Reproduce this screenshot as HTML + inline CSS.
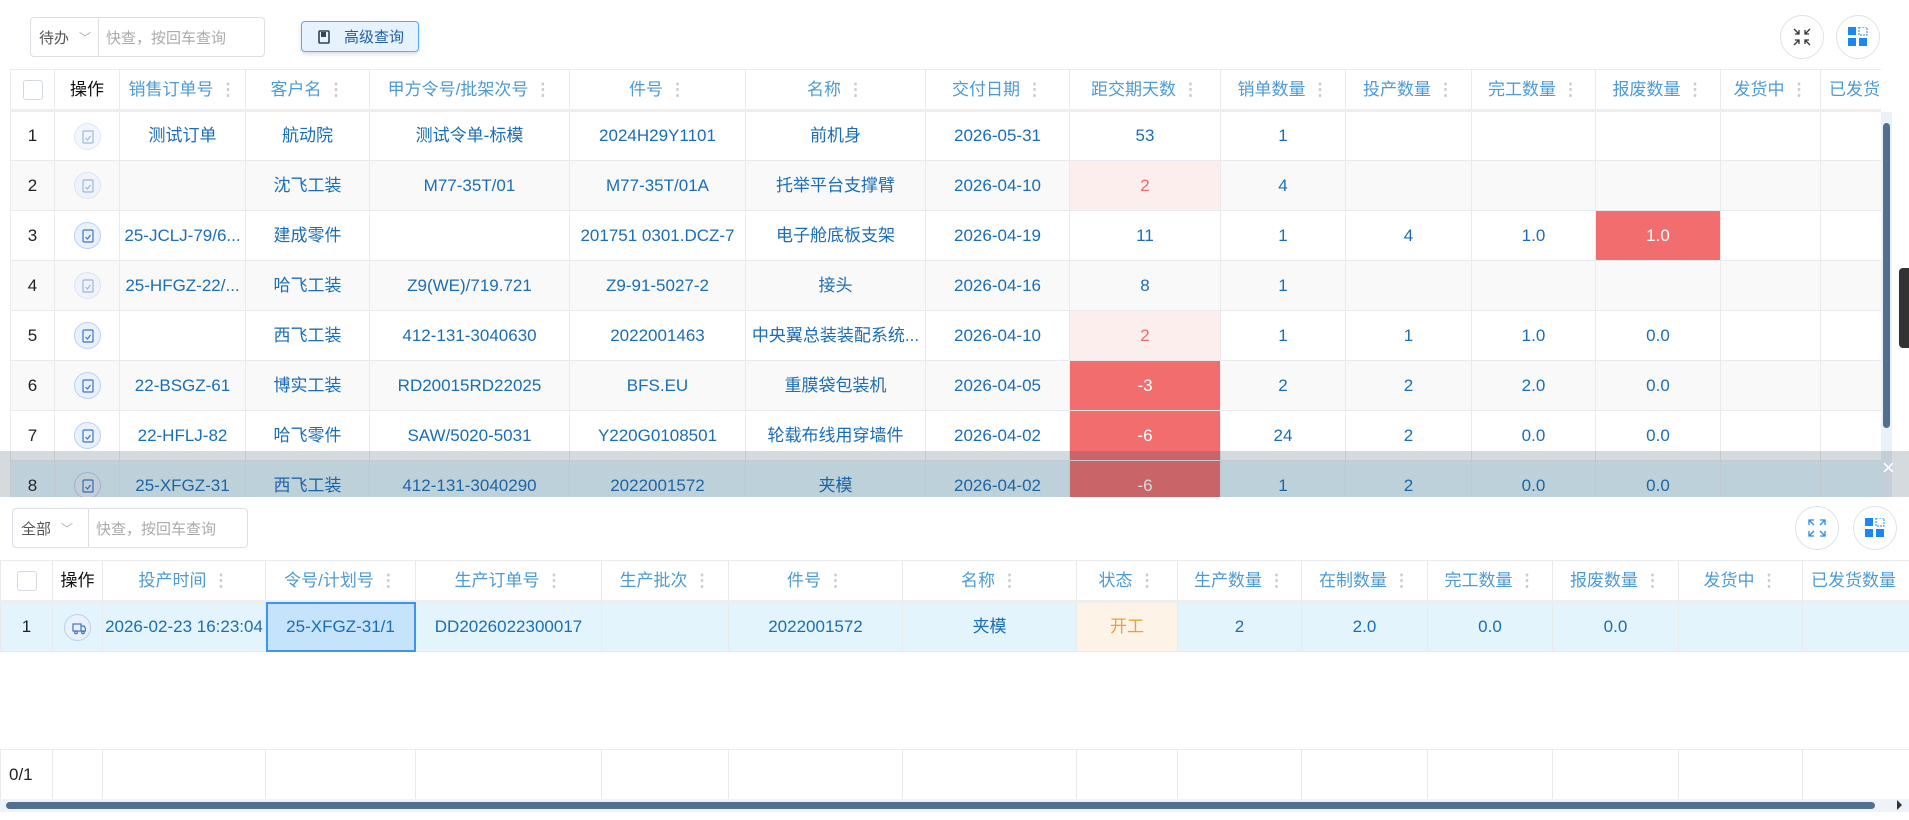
<!DOCTYPE html>
<html><head><meta charset="utf-8"><style>
*{box-sizing:border-box;margin:0;padding:0}
body{width:1909px;height:820px;overflow:hidden;background:#fff;font-family:"Liberation Sans","Noto Sans CJK SC",sans-serif;position:relative}
.abs{position:absolute}
.sel{border:1px solid #dcdfe6;border-radius:4px;display:flex;background:#fff;font-size:15px}
.sel .a{width:68px;border-right:1px solid #dcdfe6;display:flex;align-items:center;padding-left:8px;color:#555}
.sel .a span{margin-left:10px;color:#aaa;font-size:12px}
.sel .b{display:flex;align-items:center;padding-left:7px;color:#aaa}
.circ{width:44px;height:44px;border:1px solid #dde2ea;border-radius:50%;background:#fff;display:flex;align-items:center;justify-content:center}
table{border-collapse:collapse;table-layout:fixed;font-size:17px}
td,th{border:1px solid #e8eaed;text-align:center;white-space:nowrap;overflow:hidden;text-overflow:ellipsis;color:#1a6db8;font-weight:normal;line-height:20px;vertical-align:middle}
th{color:#4d9ad5;height:41px;background:#fff}
th i{font-style:normal;color:#c8ccd2;margin-left:6px;font-weight:bold}
td{height:50px}
td.n{color:#222}
tr.s td{background:#f9f9f9}
.chk{display:inline-block;width:20px;height:20px;border:1px solid #d5d9e0;border-radius:3px;vertical-align:middle}
.ic{display:inline-block;width:27px;height:27px;border-radius:50%;background:#e9f1fc;border:1px solid #bcd0ec;vertical-align:middle;position:relative}
.ic.f{opacity:.5}
.ic svg{position:absolute;left:7px;top:6px}
.pk{background:#fdeeee!important;color:#f06a6a}
.rd{background:#f26d6d!important;color:#fff}
</style></head><body>
<div class="abs sel" style="left:30px;top:17px;width:235px;height:40px"><div class="a">待办<span>﹀</span></div><div class="b">快查，按回车查询</div></div>
<div class="abs" style="left:301px;top:21px;width:118px;height:31px;border:1px solid #5aa9f5;border-radius:4px;background:#e6f3ff;box-shadow:0 2px 4px rgba(0,0,0,.15);font-size:15px;color:#1f5fa8;display:flex;align-items:center;padding-left:16px"><svg width="12" height="14" style="margin-right:14px"><rect x="1" y="1" width="10" height="12" rx="1" fill="none" stroke="#345" stroke-width="1.6"/><rect x="3" y="2" width="5" height="5" fill="#345"/></svg>高级查询</div>
<div class="abs circ" style="left:1780px;top:15px"><svg width="18" height="18" stroke="#333" fill="none" stroke-width="1.3"><path d="M1 1l5 5M6 2v4H2M17 1l-5 5M12 2v4h4M1 17l5-5M6 16v-4H2M17 17l-5-5M12 16v-4h4"/></svg></div>
<div class="abs circ" style="left:1836px;top:15px"><svg width="20" height="20"><rect x="0" y="0" width="8" height="8" fill="#1c86f2"/><rect x="11" y="0" width="8" height="8" fill="none" stroke="#1c86f2" stroke-dasharray="2 1"/><rect x="0" y="11" width="8" height="8" fill="#1c86f2"/><rect x="11" y="11" width="8" height="8" fill="#1c86f2"/></svg></div>

<div class="abs" style="left:10px;top:69px;width:1871px;height:428px;overflow:hidden">
<table style="width:1950px">
<colgroup><col style="width:44px"><col style="width:65px"><col style="width:126px"><col style="width:124px"><col style="width:200px"><col style="width:176px"><col style="width:180px"><col style="width:144px"><col style="width:151px"><col style="width:125px"><col style="width:126px"><col style="width:124px"><col style="width:125px"><col style="width:100px"><col style="width:140px"></colgroup>
<tr style="border-bottom:3px solid #eee"><th><span class="chk"></span></th><th style="color:#111">操作</th><th>销售订单号<i>⋮</i></th><th>客户名<i>⋮</i></th><th>甲方令号/批架次号<i>⋮</i></th><th>件号<i>⋮</i></th><th>名称<i>⋮</i></th><th>交付日期<i>⋮</i></th><th>距交期天数<i>⋮</i></th><th>销单数量<i>⋮</i></th><th>投产数量<i>⋮</i></th><th>完工数量<i>⋮</i></th><th>报废数量<i>⋮</i></th><th>发货中<i>⋮</i></th><th style="text-align:left;padding-left:8px">已发货数量</th></tr>
<tr><td class="n">1</td><td><span class="ic f"><svg width="12" height="14" fill="none" stroke="#3f74c0" stroke-width="1.2"><rect x="1" y="1" width="10" height="12" rx="1"/><path d="M3.5 8l2 2 3-4"/></svg></span></td><td>测试订单</td><td>航动院</td><td>测试令单-标模</td><td>2024H29Y1101</td><td>前机身</td><td>2026-05-31</td><td>53</td><td>1</td><td></td><td></td><td></td><td></td><td></td></tr>
<tr class="s"><td class="n">2</td><td><span class="ic f"><svg width="12" height="14" fill="none" stroke="#3f74c0" stroke-width="1.2"><rect x="1" y="1" width="10" height="12" rx="1"/><path d="M3.5 8l2 2 3-4"/></svg></span></td><td></td><td>沈飞工装</td><td>M77-35T/01</td><td>M77-35T/01A</td><td>托举平台支撑臂</td><td>2026-04-10</td><td class="pk">2</td><td>4</td><td></td><td></td><td></td><td></td><td></td></tr>
<tr><td class="n">3</td><td><span class="ic"><svg width="12" height="14" fill="none" stroke="#3f74c0" stroke-width="1.2"><rect x="1" y="1" width="10" height="12" rx="1"/><path d="M3.5 8l2 2 3-4"/></svg></span></td><td>25-JCLJ-79/6...</td><td>建成零件</td><td></td><td>201751 0301.DCZ-7</td><td>电子舱底板支架</td><td>2026-04-19</td><td>11</td><td>1</td><td>4</td><td>1.0</td><td class="rd">1.0</td><td></td><td></td></tr>
<tr class="s"><td class="n">4</td><td><span class="ic f"><svg width="12" height="14" fill="none" stroke="#3f74c0" stroke-width="1.2"><rect x="1" y="1" width="10" height="12" rx="1"/><path d="M3.5 8l2 2 3-4"/></svg></span></td><td>25-HFGZ-22/...</td><td>哈飞工装</td><td>Z9(WE)/719.721</td><td>Z9-91-5027-2</td><td>接头</td><td>2026-04-16</td><td>8</td><td>1</td><td></td><td></td><td></td><td></td><td></td></tr>
<tr><td class="n">5</td><td><span class="ic"><svg width="12" height="14" fill="none" stroke="#3f74c0" stroke-width="1.2"><rect x="1" y="1" width="10" height="12" rx="1"/><path d="M3.5 8l2 2 3-4"/></svg></span></td><td></td><td>西飞工装</td><td>412-131-3040630</td><td>2022001463</td><td>中央翼总装装配系统...</td><td>2026-04-10</td><td class="pk">2</td><td>1</td><td>1</td><td>1.0</td><td>0.0</td><td></td><td></td></tr>
<tr class="s"><td class="n">6</td><td><span class="ic"><svg width="12" height="14" fill="none" stroke="#3f74c0" stroke-width="1.2"><rect x="1" y="1" width="10" height="12" rx="1"/><path d="M3.5 8l2 2 3-4"/></svg></span></td><td>22-BSGZ-61</td><td>博实工装</td><td>RD20015RD22025</td><td>BFS.EU</td><td>重膜袋包装机</td><td>2026-04-05</td><td class="rd">-3</td><td>2</td><td>2</td><td>2.0</td><td>0.0</td><td></td><td></td></tr>
<tr><td class="n">7</td><td><span class="ic"><svg width="12" height="14" fill="none" stroke="#3f74c0" stroke-width="1.2"><rect x="1" y="1" width="10" height="12" rx="1"/><path d="M3.5 8l2 2 3-4"/></svg></span></td><td>22-HFLJ-82</td><td>哈飞零件</td><td>SAW/5020-5031</td><td>Y220G0108501</td><td>轮载布线用穿墙件</td><td>2026-04-02</td><td class="rd">-6</td><td>24</td><td>2</td><td>0.0</td><td>0.0</td><td></td><td></td></tr>
<tr><td class="n" style="background:#e3f4fd">8</td><td style="background:#e3f4fd"><span class="ic"><svg width="12" height="14" fill="none" stroke="#3f74c0" stroke-width="1.2"><rect x="1" y="1" width="10" height="12" rx="1"/><path d="M3.5 8l2 2 3-4"/></svg></span></td><td style="background:#e3f4fd">25-XFGZ-31</td><td style="background:#e3f4fd">西飞工装</td><td style="background:#e3f4fd">412-131-3040290</td><td style="background:#e3f4fd">2022001572</td><td style="background:#e3f4fd">夹模</td><td style="background:#e3f4fd">2026-04-02</td><td class="rd">-6</td><td style="background:#e3f4fd">1</td><td style="background:#e3f4fd">2</td><td style="background:#e3f4fd">0.0</td><td style="background:#e3f4fd">0.0</td><td style="background:#e3f4fd"></td><td style="background:#e3f4fd"></td></tr>
</table></div>
<div class="abs" style="left:1881px;top:112px;width:11px;height:385px;background:#eaf1fa"></div>
<div class="abs" style="left:1883px;top:123px;width:7px;height:305px;background:#51708f;border-radius:4px"></div>
<div class="abs" style="left:1899px;top:268px;width:10px;height:80px;background:#333;border-radius:4px 0 0 4px"></div>
<div class="abs" style="left:0;top:451px;width:1909px;height:46px;background:rgba(40,70,85,.2)"></div>
<div class="abs" style="left:1882px;top:455px;color:#fff;font-size:22px">×</div>

<div class="abs sel" style="left:12px;top:508px;width:236px;height:40px"><div class="a" style="width:76px">全部<span>﹀</span></div><div class="b">快查，按回车查询</div></div>
<div class="abs circ" style="left:1795px;top:506px"><svg width="18" height="18" stroke="#2a8cf0" fill="none" stroke-width="1.3"><path d="M1 6V1h5M1 1l5 5M17 6V1h-5M17 1l-5 5M1 12v5h5M1 17l5-5M17 12v5h-5M17 17l-5-5"/></svg></div>
<div class="abs circ" style="left:1853px;top:506px"><svg width="20" height="20"><rect x="0" y="0" width="8" height="8" fill="#1c86f2"/><rect x="11" y="0" width="8" height="8" fill="none" stroke="#1c86f2" stroke-dasharray="2 1"/><rect x="0" y="11" width="8" height="8" fill="#1c86f2"/><rect x="11" y="11" width="8" height="8" fill="#1c86f2"/></svg></div>

<div class="abs" style="left:0;top:560px;width:1909px;height:240px;overflow:hidden">
<table style="width:1930px">
<colgroup><col style="width:52px"><col style="width:50px"><col style="width:163px"><col style="width:150px"><col style="width:186px"><col style="width:127px"><col style="width:174px"><col style="width:174px"><col style="width:101px"><col style="width:124px"><col style="width:126px"><col style="width:125px"><col style="width:126px"><col style="width:124px"><col style="width:127px"></colgroup>
<tr style="border-bottom:3px solid #eee"><th><span class="chk"></span></th><th style="color:#111">操作</th><th>投产时间<i>⋮</i></th><th>令号/计划号<i>⋮</i></th><th>生产订单号<i>⋮</i></th><th>生产批次<i>⋮</i></th><th>件号<i>⋮</i></th><th>名称<i>⋮</i></th><th>状态<i>⋮</i></th><th>生产数量<i>⋮</i></th><th>在制数量<i>⋮</i></th><th>完工数量<i>⋮</i></th><th>报废数量<i>⋮</i></th><th>发货中<i>⋮</i></th><th style="text-align:left;padding-left:8px">已发货数量</th></tr>
<tr style="background:#e3f4fd"><td class="n">1</td><td><span class="ic"><svg width="14" height="14" fill="none" stroke="#3f74c0" stroke-width="1.2"><rect x="1" y="3" width="8" height="7"/><path d="M9 5h3l1.5 2.5V10H9"/><circle cx="4" cy="11.5" r="1.3"/><circle cx="11" cy="11.5" r="1.3"/></svg></span></td><td>2026-02-23 16:23:04</td><td style="background:#c5e3fb;outline:2px solid #3f94f0;outline-offset:-2px">25-XFGZ-31/1</td><td>DD2026022300017</td><td></td><td>2022001572</td><td>夹模</td><td style="background:#fdf3e6;color:#ef9d3c">开工</td><td>2</td><td>2.0</td><td>0.0</td><td>0.0</td><td></td><td></td></tr>
<tr><td colspan="15" style="height:98px;border-left:none;border-right:none"></td></tr>
<tr><td class="n" style="text-align:left;padding-left:8px">0/1</td><td></td><td></td><td></td><td></td><td></td><td></td><td></td><td></td><td></td><td></td><td></td><td></td><td></td><td></td></tr>
</table></div>
<div class="abs" style="left:0;top:799px;width:1909px;height:13px;background:#eef3f9"></div>
<div class="abs" style="left:6px;top:802px;width:1869px;height:7px;background:#51708f;border-radius:4px"></div>
<div class="abs" style="left:1897px;top:800px;width:0;height:0;border-left:5px solid #333;border-top:5px solid transparent;border-bottom:5px solid transparent"></div>
</body></html>
